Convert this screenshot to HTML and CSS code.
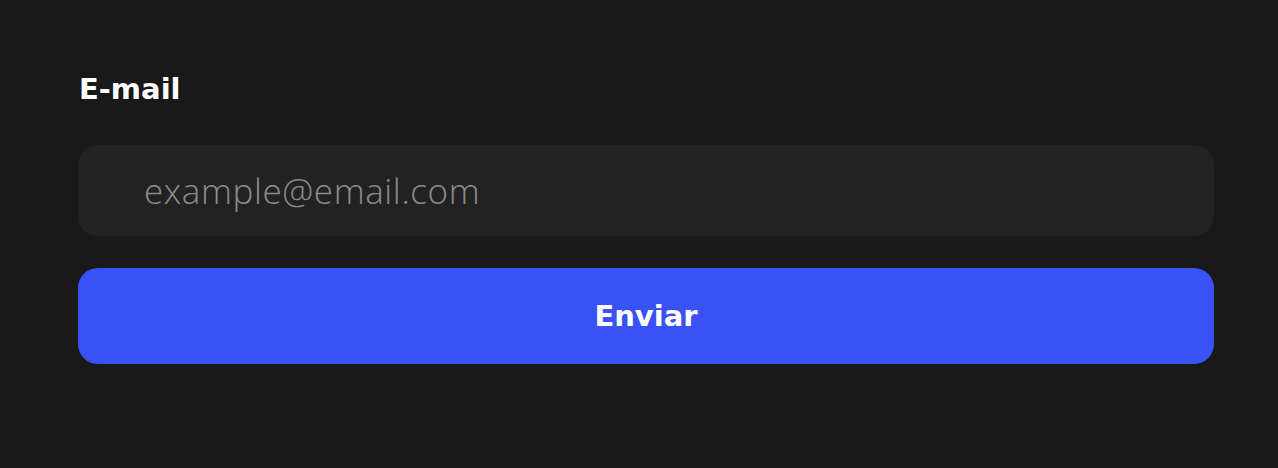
FILE: index.html
```html
<!DOCTYPE html>
<html lang="pt">
<head>
<meta charset="utf-8">
<title>E-mail</title>
<link rel="stylesheet" href="styles.css">
</head>
<body>
<form class="form">
  <label class="label" for="email">E-mail</label>
  <input class="input" id="email" type="email" placeholder="example@email.com">
  <button class="button" type="button">Enviar</button>
</form>
</body>
</html>
```

FILE: styles.css
```css
html, body {
  margin: 0;
  padding: 0;
  background: #191919;
  height: 100%;
}
.form {
  display: flex;
  flex-direction: column;
  width: 1136px;
  padding: 69px 0 0 78px;
  font-family: "DejaVu Sans", sans-serif;
}
.label {
  color: #ffffff;
  font-size: 29px;
  font-weight: 600;
  line-height: 40px;
  padding-left: 1px;
  margin-bottom: 36px;
}
.input {
  box-sizing: border-box;
  height: 91px;
  border: none;
  outline: none;
  border-radius: 20px;
  background: #222222;
  padding: 0 0 0 66px;
  font-family: "Open Sans", sans-serif;
  font-size: 35px;
  font-weight: 350;
  letter-spacing: 0.6px;
  color: #ffffff;
}
.input::placeholder {
  color: #8c8c8c;
}
.button {
  margin-top: 32px;
  height: 96px;
  border: none;
  border-radius: 20px;
  background: #3952f5;
  color: #ffffff;
  font-family: "DejaVu Sans", sans-serif;
  font-size: 29px;
  font-weight: 600;
  cursor: pointer;
}
```
